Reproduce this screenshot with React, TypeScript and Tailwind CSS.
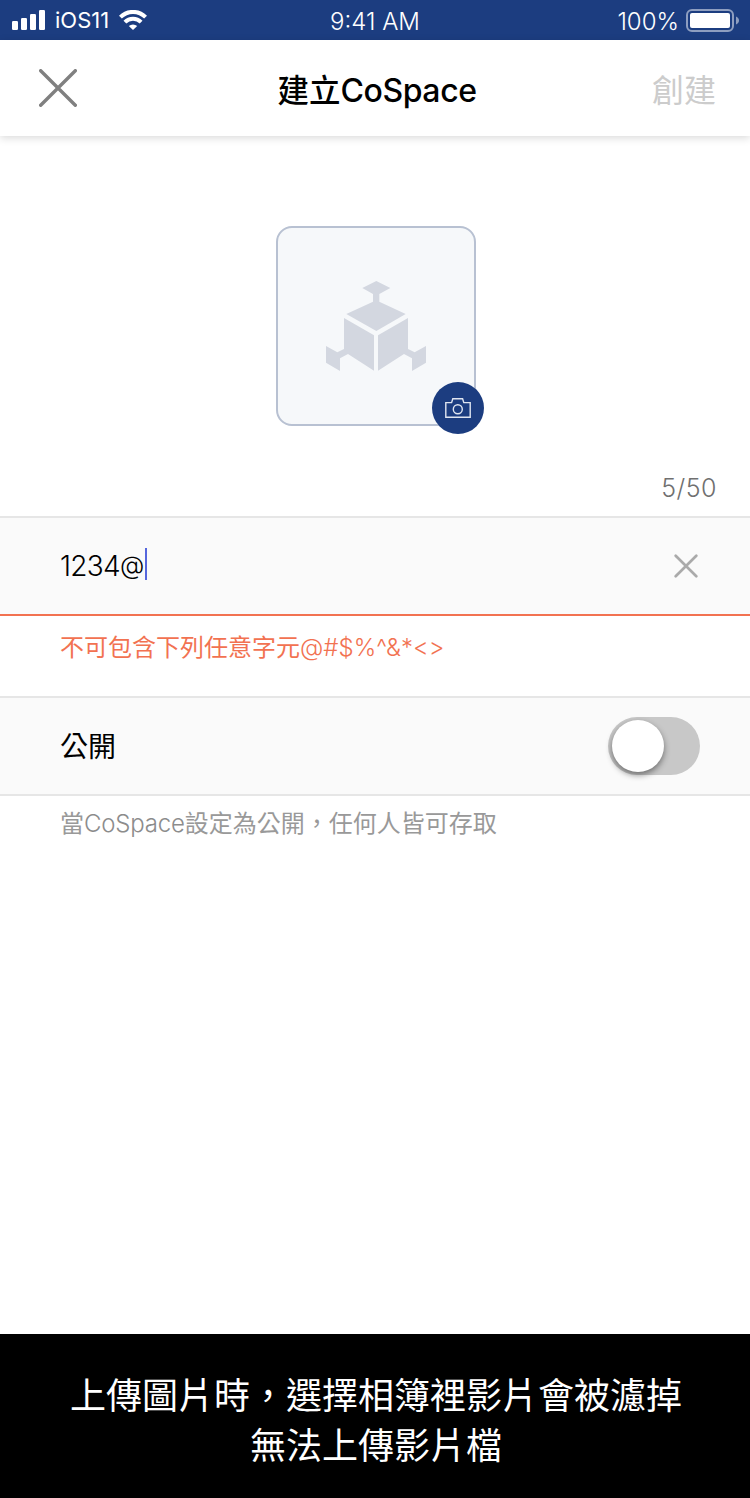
import React, { useState } from "react";

function SignalIcon() {
  return (
    <svg width="33" height="20" viewBox="0 0 33 20" fill="white">
      <rect x="0" y="11" width="6" height="9" rx="1.2" />
      <rect x="9" y="8" width="6" height="12" rx="1.2" />
      <rect x="18" y="4" width="6" height="16" rx="1.2" />
      <rect x="27" y="0" width="6" height="20" rx="1.2" />
    </svg>
  );
}

function WifiIcon() {
  return (
    <svg width="28" height="20" viewBox="0 0 28 20" fill="none" stroke="white" strokeWidth="4">
      <path d="M1.4 7.2A17.6 17.6 0 0 1 26.6 7.2" />
      <path d="M5.9 12.2A11.4 11.4 0 0 1 22.1 12.2" />
      <path d="M14 20L9.8 16.1A6.2 6.2 0 0 1 18.2 16.1Z" fill="white" stroke="none" />
    </svg>
  );
}

function BatteryIcon() {
  return (
    <svg width="54" height="23" viewBox="0 0 54 23" fill="none">
      <rect x="1" y="1" width="46" height="21" rx="5" stroke="white" strokeOpacity="0.5" strokeWidth="2" />
      <rect x="4" y="4" width="40" height="15" rx="2" fill="white" />
      <path d="M50 7.5C54 9 54 14 50 15.5Z" fill="white" fillOpacity="0.5" />
    </svg>
  );
}

function CrossIcon({ size, stroke }: { size: number; stroke: string }) {
  const end = size - 1.7;
  return (
    <svg width={size} height={size} fill="none" stroke={stroke} strokeWidth={size > 30 ? 3.4 : 2.7} strokeLinecap="round">
      <path d={`M1.7 1.7L${end} ${end}M${end} 1.7L1.7 ${end}`} />
    </svg>
  );
}

function CubeIcon() {
  return (
    <svg width="100" height="90" viewBox="180 195 300 270" fill="#d3d7e0">
      <path d="M331 195L373 216L340 234V257L419 294L331 345L241 294L321 257V234L289 216Z" />
      <path d="M234 306L324 358V464L246 414L222 427V465L180 440V390L214 409L234 399Z" />
      <path d="M426 306L336 358V464L414 414L438 427V465L480 440V390L446 409L426 399Z" />
    </svg>
  );
}

function CameraIcon() {
  return (
    <svg width="26" height="20" viewBox="0 0 26 20" fill="none" stroke="#dfe5f0" strokeWidth="1.4">
      <path d="M0.8 4.6H6.6L7.8 0.8H17.6L18.8 4.6H25.2V19.3H0.8Z" />
      <circle cx="12.8" cy="11.3" r="4.5" />
    </svg>
  );
}

export default function App() {
  const [open, setOpen] = useState(false);
  return (
    <div className="flex h-[1498px] w-[750px] flex-col overflow-hidden whitespace-nowrap bg-white font-['Inter','Noto_Sans_CJK_TC',sans-serif] font-normal">
      <div className="grid h-10 shrink-0 grid-cols-3 items-center bg-[#1c3d80] text-white">
        <div className="flex items-center pl-3">
          <SignalIcon />
          <span className="ml-[10px] w-[64px] text-[22px] leading-10">iOS11</span>
          <WifiIcon />
        </div>
        <span className="pt-1 text-center text-[24px] font-light leading-9">9:41 AM</span>
        <div className="flex items-center justify-end pr-[10px]">
          <span className="mr-[7px] pt-1 text-[24px] font-light leading-9">100%</span>
          <BatteryIcon />
        </div>
      </div>

      <header className="relative grid h-24 shrink-0 grid-cols-3 items-center bg-white pl-[39px] pr-[34px] shadow-[0_2px_8px_rgba(0,0,0,0.15)]">
        <button aria-label="關閉" className="justify-self-start">
          <CrossIcon size={38} stroke="#808080" />
        </button>
        <h1 className="flex items-center justify-self-center pr-px pt-[6px] text-[32px] font-medium leading-[48px] text-black">
          <span className="pb-px text-[31.5px]">建立</span>
          <span className="tracking-[-0.4px]">CoSpace</span>
        </h1>
        <button className="justify-self-end pt-[5px] text-[32px] leading-[48px] text-[#cccccc]">創建</button>
      </header>

      <section className="flex h-[380px] shrink-0 flex-col items-center pt-[90px]">
        <div className="relative ml-[2px] flex h-[200px] w-[200px] shrink-0 items-center justify-center rounded-2xl border-2 border-[#b8c1d2] bg-[#f6f8fa]">
          <CubeIcon />
          <button
            aria-label="相機"
            className="absolute -bottom-[10px] -right-[10px] flex h-[52px] w-[52px] items-center justify-center rounded-full bg-[#1c3d80]"
          >
            <CameraIcon />
          </button>
        </div>
        <span className="mt-[44px] self-end pr-[33px] text-[25px] font-light leading-9 tracking-[0.5px] text-[#707070]">5/50</span>
      </section>

      <div className="flex h-[100px] shrink-0 items-center border-b-2 border-t-2 border-b-[#f27251] border-t-[#e6e6e6] bg-[#fafafa] pl-[60px] pr-[52px]">
        <span className="text-[28px] font-light leading-10 tracking-[-0.7px] text-black">1234</span>
        <span className="w-[25px] pb-[3px] text-[25px] font-light leading-10 tracking-[-0.9px] text-black">@</span>
        <span className="-mt-1 h-8 w-[2px] bg-[#5566dd]" />
        <button aria-label="清除" className="ml-auto">
          <CrossIcon size={24} stroke="#aaaaaa" />
        </button>
      </div>
      <p className="h-20 shrink-0 pl-[60px] pt-[14px] text-[24px] leading-9 text-[#f27251]">
        不可包含下列任意字元<span className="font-light">@#$%^&amp;*&lt;&gt;</span>
      </p>

      <div className="flex h-[100px] shrink-0 items-center justify-between border-y-2 border-[#e6e6e6] bg-[#fafafa] pl-[60px] pr-[50px]">
        <span className="pt-[2px] text-[28px] leading-10 text-black">公開</span>
        <button
          role="switch"
          aria-label="公開"
          aria-checked={open}
          onClick={() => setOpen(!open)}
          className={`flex h-[58px] w-[92px] items-center rounded-full px-1 ${open ? "justify-end bg-[#1c3d80]" : "justify-start bg-[#c8c8c8]"}`}
        >
          <span className="h-[52px] w-[52px] rounded-full bg-white shadow-[0_3px_6px_rgba(0,0,0,0.45)]" />
        </button>
      </div>
      <p className="pl-[60px] pt-[10px] text-[24px] leading-9 text-[#999999]">
        當<span className="font-light tracking-[-0.2px] text-[#8c8c8c]">CoSpace</span>設定為公開，任何人皆可存取
      </p>

      <footer className="mt-auto flex h-[164px] shrink-0 flex-col items-center bg-black pl-[2px] pt-[37px] text-[36px] leading-[50px] text-white">
        <p>上傳圖片時，選擇相簿裡影片會被濾掉</p>
        <p>無法上傳影片檔</p>
      </footer>
    </div>
  );
}
